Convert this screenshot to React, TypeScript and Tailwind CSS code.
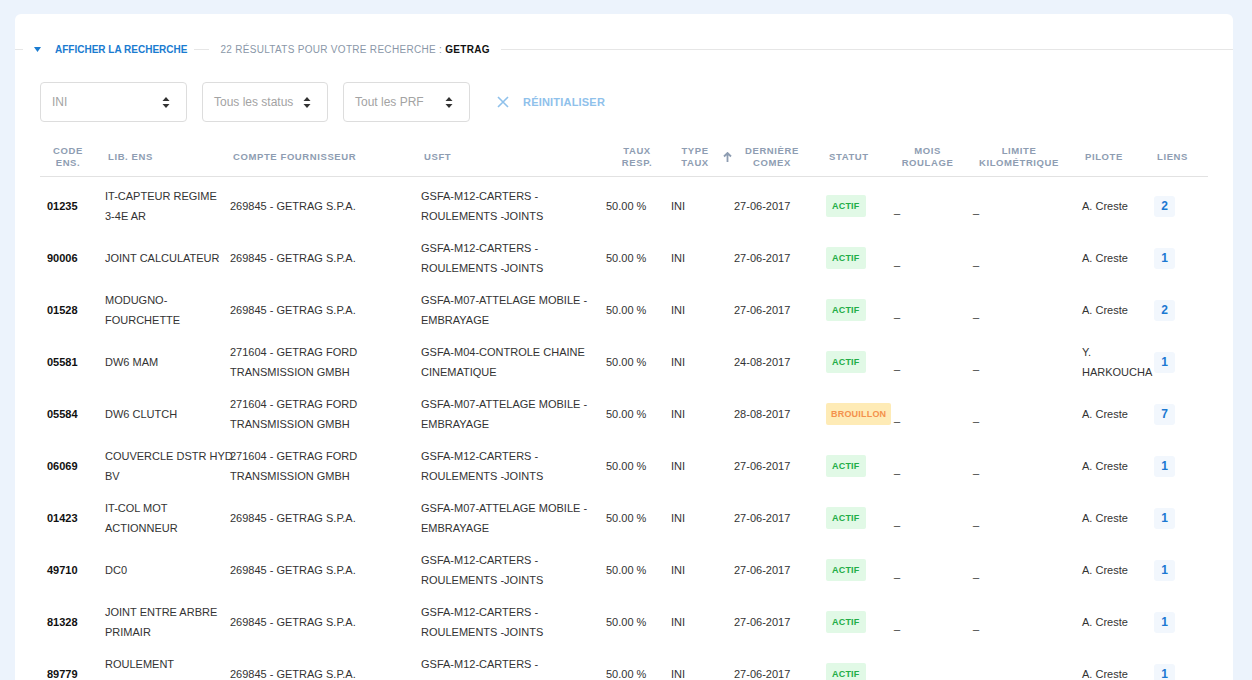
import React from "react";

type Row = {
  code: string;
  lib: string[];
  compte: string[];
  usft: string[];
  date: string;
  statut: "ACTIF" | "BROUILLON";
  pilote: string[];
  liens: string;
};

const S = "269845 - GETRAG S.P.A.";
const F = ["271604 - GETRAG FORD", "TRANSMISSION GMBH"];
const M12 = ["GSFA-M12-CARTERS -", "ROULEMENTS -JOINTS"];
const M07 = ["GSFA-M07-ATTELAGE MOBILE -", "EMBRAYAGE"];

const rows: Row[] = [
  { code: "01235", lib: ["IT-CAPTEUR REGIME", "3-4E AR"], compte: [S], usft: M12, date: "27-06-2017", statut: "ACTIF", pilote: ["A. Creste"], liens: "2" },
  { code: "90006", lib: ["JOINT CALCULATEUR"], compte: [S], usft: M12, date: "27-06-2017", statut: "ACTIF", pilote: ["A. Creste"], liens: "1" },
  { code: "01528", lib: ["MODUGNO-", "FOURCHETTE"], compte: [S], usft: M07, date: "27-06-2017", statut: "ACTIF", pilote: ["A. Creste"], liens: "2" },
  { code: "05581", lib: ["DW6 MAM"], compte: F, usft: ["GSFA-M04-CONTROLE CHAINE", "CINEMATIQUE"], date: "24-08-2017", statut: "ACTIF", pilote: ["Y.", "HARKOUCHA"], liens: "1" },
  { code: "05584", lib: ["DW6 CLUTCH"], compte: F, usft: M07, date: "28-08-2017", statut: "BROUILLON", pilote: ["A. Creste"], liens: "7" },
  { code: "06069", lib: ["COUVERCLE DSTR HYD", "BV"], compte: F, usft: M12, date: "27-06-2017", statut: "ACTIF", pilote: ["A. Creste"], liens: "1" },
  { code: "01423", lib: ["IT-COL MOT", "ACTIONNEUR"], compte: [S], usft: M07, date: "27-06-2017", statut: "ACTIF", pilote: ["A. Creste"], liens: "1" },
  { code: "49710", lib: ["DC0"], compte: [S], usft: M12, date: "27-06-2017", statut: "ACTIF", pilote: ["A. Creste"], liens: "1" },
  { code: "81328", lib: ["JOINT ENTRE ARBRE", "PRIMAIR"], compte: [S], usft: M12, date: "27-06-2017", statut: "ACTIF", pilote: ["A. Creste"], liens: "1" },
  { code: "89779", lib: ["ROULEMENT", "D'ARBRE ENTREE"], compte: [S], usft: M12, date: "27-06-2017", statut: "ACTIF", pilote: ["A. Creste"], liens: "1" },
];

const GRID =
  "grid grid-cols-[65px_125px_191px_185px_65px_63px_92px_68px_79px_109px_72px_54px]";

function Lines({ lines }: { lines: string[] }) {
  return (
    <div className="flex flex-col">
      {lines.map((l, i) => (
        <span key={i} className="whitespace-nowrap">
          {l}
        </span>
      ))}
    </div>
  );
}

function SelectArrows() {
  return (
    <svg width="8" height="11" viewBox="0 0 8 11">
      <path d="M4 0 L7.5 4 L0.5 4 Z" fill="#333" />
      <path d="M4 11 L7.5 7 L0.5 7 Z" fill="#333" />
    </svg>
  );
}

function Select({ label, w }: { label: string; w: string }) {
  return (
    <div
      className={`${w} h-[40px] border border-[#dddddd] rounded-[4px] flex items-center justify-between pl-[11px] pr-[16px] text-[12px] text-[#a3a3a3]`}
    >
      <span>{label}</span>
      <SelectArrows />
    </div>
  );
}

export default function App() {
  return (
    <div
      className="w-[1252px] h-[680px] overflow-hidden bg-[#ecf3fc] pt-[14px] pl-[15px]"
      style={{ fontFamily: '"Liberation Sans", Arial, sans-serif' }}
    >
      <div className="w-[1218px] h-[700px] bg-white rounded-t-[6px] pt-[25px]">
        {/* Legend line */}
        <div className="flex items-center h-[20px]">
          <div className="w-[8px] h-px bg-[#e6e6e6]" />
          <svg width="7" height="5" viewBox="0 0 7 5" className="ml-[11px]">
            <path d="M0 0 L7 0 L3.5 5 Z" fill="#1a7bd0" />
          </svg>
          <span className="ml-[14px] text-[10px] font-bold text-[#1a7bd0] whitespace-nowrap">
            AFFICHER LA RECHERCHE
          </span>
          <div className="ml-[7px] w-[15px] h-px bg-[#e6e6e6]" />
          <span className="ml-[11px] text-[10px] text-[#8a97a8] whitespace-nowrap tracking-[0.3px]">
            22 RÉSULTATS POUR VOTRE RECHERCHE :{" "}
            <span className="font-bold text-[#111]">GETRAG</span>
          </span>
          <div className="ml-[11px] flex-1 h-px bg-[#e6e6e6]" />
        </div>

        <div className="px-[25px]">
          {/* Filters */}
          <div className="flex items-center gap-[15px] mt-[23px]">
            <Select label="INI" w="w-[147px]" />
            <Select label="Tous les status" w="w-[126px]" />
            <Select label="Tout les PRF" w="w-[127px]" />
            <div className="flex items-center ml-[12px] text-[#8fc1eb]">
              <svg width="12" height="12" viewBox="0 0 12 12">
                <path d="M1 1 L11 11 M11 1 L1 11" stroke="#8fc1eb" strokeWidth="1.6" />
              </svg>
              <span className="ml-[14px] text-[11px] font-bold tracking-[0.2px]">RÉINITIALISER</span>
            </div>
          </div>

          {/* Table */}
          <div className="mt-[15px] w-[1168px]">
            <div
              className={`${GRID} h-[40px] items-center border-b border-[#e2e2e2] text-[9.5px] font-bold text-[#8e9db2] tracking-[0.6px] leading-[12px] uppercase`}
            >
              <div className="pl-[12px] text-center w-[44px]">CODE<br />ENS.</div>
              <div className="pl-[3px]">LIB. ENS</div>
              <div className="pl-[3px]">COMPTE FOURNISSEUR</div>
              <div className="pl-[3px]">USFT</div>
              <div className="pl-[10px] text-center w-[42px] box-content">TAUX<br />RESP.</div>
              <div className="pl-[9px] text-center w-[30px] box-content">TYPE<br />TAUX</div>
              <div className="flex items-center ml-[-11px]">
                <svg width="9" height="10" viewBox="0 0 9 10">
                  <path d="M4.5 10 L4.5 1.5 M1 4.5 L4.5 1 L8 4.5" stroke="#8e9db2" strokeWidth="1.8" fill="none" />
                </svg>
                <div className="ml-[13px] text-center">DERNIÈRE<br />COMEX</div>
              </div>
              <div className="pl-[3px]">STATUT</div>
              <div className="pl-[5px] text-center w-[57px] box-content">MOIS<br />ROULAGE</div>
              <div className="pl-[5px] text-center w-[82px] box-content">LIMITE<br />KILOMÉTRIQUE</div>
              <div className="pl-[3px]">PILOTE</div>
              <div className="pl-[3px]">LIENS</div>
            </div>

            <div className="pt-[3px]">
              {rows.map((r) => (
                <div
                  key={r.code}
                  className={`${GRID} h-[52px] items-center text-[11px] leading-[20px] text-[#333]`}
                >
                  <div className="pl-[7px] font-bold text-[#111]">{r.code}</div>
                  <Lines lines={r.lib} />
                  <Lines lines={r.compte} />
                  <Lines lines={r.usft} />
                  <div>50.00 %</div>
                  <div>INI</div>
                  <div>{r.date}</div>
                  <div>
                    {r.statut === "ACTIF" ? (
                      <span className="inline-flex items-center h-[22px] px-[6px] rounded-[2px] bg-[#e1f9e6] text-[#22ad47] text-[9px] font-bold tracking-[0.2px]">
                        ACTIF
                      </span>
                    ) : (
                      <span className="inline-flex items-center h-[22px] px-[5px] rounded-[2px] bg-[#feebb6] text-[#f4914c] text-[9px] font-bold tracking-[0.2px]">
                        BROUILLON
                      </span>
                    )}
                  </div>
                  <div className="pt-[6px]">_</div>
                  <div className="pt-[6px]">_</div>
                  <Lines lines={r.pilote} />
                  <div>
                    <span className="inline-flex items-center justify-center w-[21px] h-[21px] rounded-[3px] bg-[#f2f7fd] text-[#1b79d2] text-[12px] font-bold">
                      {r.liens}
                    </span>
                  </div>
                </div>
              ))}
            </div>
          </div>
        </div>
      </div>
    </div>
  );
}
